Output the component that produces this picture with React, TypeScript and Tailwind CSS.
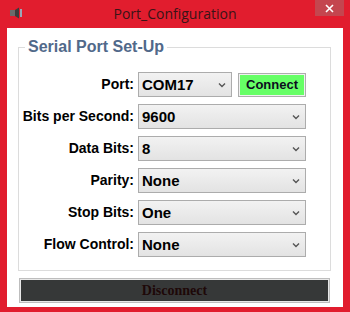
import React from 'react';

const rows = [
  { label: 'Port:', value: 'COM17', short: true },
  { label: 'Bits per Second:', value: '9600' },
  { label: 'Data Bits:', value: '8' },
  { label: 'Parity:', value: 'None' },
  { label: 'Stop Bits:', value: 'One' },
  { label: 'Flow Control:', value: 'None' },
];

const Chevron = () => (
  <svg width="8" height="6" viewBox="0 0 8 6" className="shrink-0">
    <path d="M1 1.5 L4 4.5 L7 1.5" fill="none" stroke="#555" strokeWidth="1.4" />
  </svg>
);

const Combo: React.FC<{ value: string; className?: string }> = ({ value, className }) => (
  <div
    className={`h-[25px] flex items-center justify-between pl-[3px] pr-[5px] border border-[#acacac] bg-gradient-to-b from-[#f2f2f2] to-[#e3e3e3] ${className ?? ''}`}
  >
    <span className="text-[15px] font-bold text-black leading-none">{value}</span>
    <Chevron />
  </div>
);

export default function App() {
  return (
    <div
      className="w-[350px] h-[312px] bg-[#e11d2e] flex flex-col overflow-hidden"
      style={{ fontFamily: '"Liberation Sans", Arial, sans-serif' }}
    >
      {/* title bar */}
      <div className="h-[28px] flex items-start relative">
        <svg width="14" height="12" viewBox="0 0 14 12" className="ml-[9px] mt-[7px]">
          <rect x="1" y="3" width="5" height="6" fill="#6b6b6b" />
          <path d="M6 3 L10 0.5 L10 11.5 L6 9 Z" fill="#3c3c3c" />
          <rect x="11" y="2" width="2" height="8" fill="#9aa7b8" />
        </svg>
        <div
          className="absolute left-0 right-0 top-[3px] text-center text-[14px] text-[#3a1416]"
          style={{ fontFamily: '"Open Sans", "Noto Sans", sans-serif' }}
        >
          Port_Configuration
        </div>
        <div className="ml-auto mr-[6px] w-[29px] h-[16px] bg-[#c4464f] flex items-center justify-center">
          <svg width="9" height="9" viewBox="0 0 9 9">
            <path d="M1 1 L8 8 M8 1 L1 8" stroke="#fff" strokeWidth="1.6" />
          </svg>
        </div>
      </div>

      {/* client area */}
      <div className="mx-[7px] h-[279px] bg-white flex flex-col">
        <div className="relative mt-[19px] ml-[11px] mr-[12px] h-[224px] border border-[#dcdcdc]">
          <span className="absolute left-[6px] -top-[10px] bg-white px-[3px] text-[16px] font-bold leading-[18px] text-[#51698a]">
            Serial Port Set-Up
          </span>
          <div className="mt-[24px] flex flex-col gap-[7px] pr-[24px]">
            {rows.map((r) => (
              <div key={r.label} className="flex items-center">
                <div className="w-[115px] text-right text-[14px] font-bold text-black">{r.label}</div>
                <div className="flex-1 ml-[4px] flex items-center">
                  {r.short ? (
                    <>
                      <Combo value={r.value} className="w-[94px]" />
                      <div className="ml-[6px] flex-1 h-[24px] border border-[#adadad] p-[1px] bg-[#f0f0f0]">
                        <div className="h-full bg-[#66ff66] flex items-center justify-center text-[13px] font-bold text-[#0c0c1e]">
                          Connect
                        </div>
                      </div>
                    </>
                  ) : (
                    <Combo value={r.value} className="flex-1" />
                  )}
                </div>
              </div>
            ))}
          </div>
        </div>

        <div className="mt-[7px] ml-[12px] mr-[13px] h-[25px] border border-[#bdbdbd] p-[1px] bg-[#e8e8e8]">
          <div
            className="h-full bg-[#363838] flex items-center justify-center text-[14px] font-semibold text-[#1e0808]"
            style={{ fontFamily: '"Liberation Serif", serif' }}
          >
            Disconnect
          </div>
        </div>
      </div>
    </div>
  );
}
